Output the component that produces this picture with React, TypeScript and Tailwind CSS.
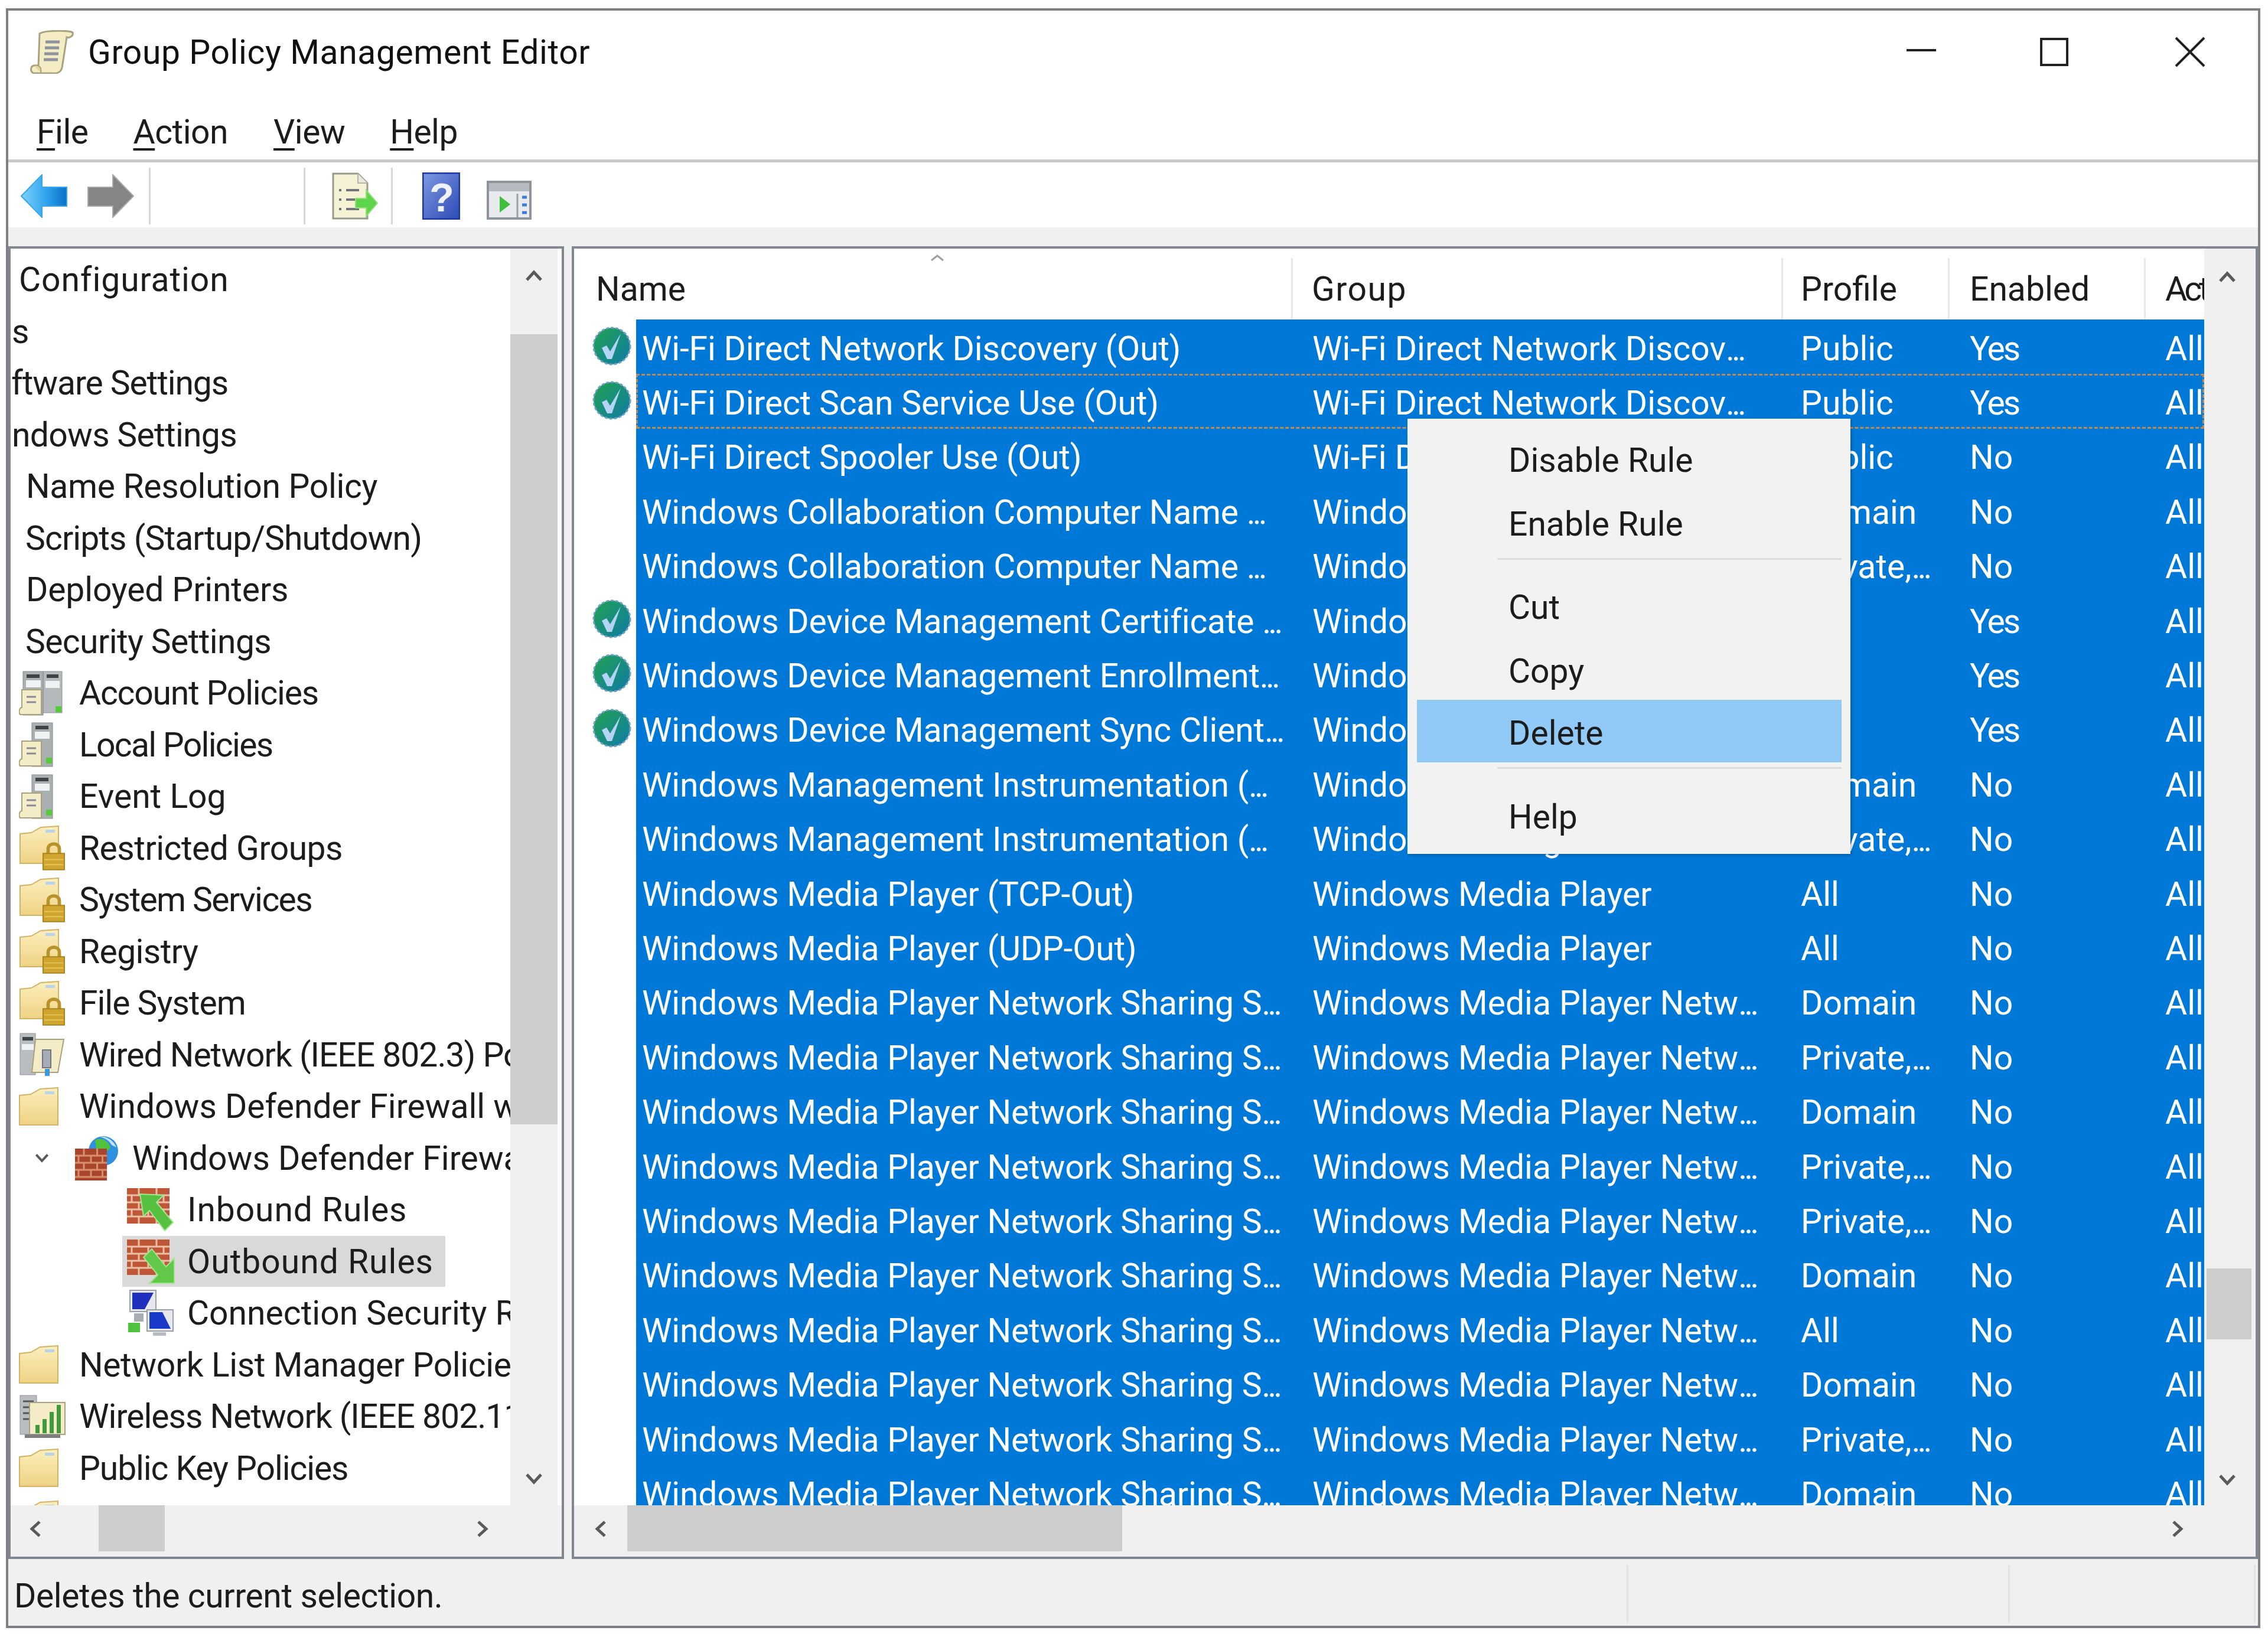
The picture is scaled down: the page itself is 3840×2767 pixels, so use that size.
import React from 'react';

const uiFont = 'font-["Roboto",sans-serif]';

type Rule = { name: string; group: string; profile: string; enabled: string; check?: boolean; focus?: boolean };

const sharing = 'Windows Media Player Network Sharing S...';
const mediaNet = 'Windows Media Player Netw...';

const rules: Rule[] = [
  { name: 'Wi-Fi Direct Network Discovery (Out)', group: 'Wi-Fi Direct Network Discov...', profile: 'Public', enabled: 'Yes', check: true },
  { name: 'Wi-Fi Direct Scan Service Use (Out)', group: 'Wi-Fi Direct Network Discov...', profile: 'Public', enabled: 'Yes', check: true, focus: true },
  { name: 'Wi-Fi Direct Spooler Use (Out)', group: 'Wi-Fi Direct Network Discov...', profile: 'Public', enabled: 'No' },
  { name: 'Windows Collaboration Computer Name ...', group: 'Windows Collaboration Comput...', profile: 'Domain', enabled: 'No' },
  { name: 'Windows Collaboration Computer Name ...', group: 'Windows Collaboration Comput...', profile: 'Private,...', enabled: 'No' },
  { name: 'Windows Device Management Certificate ...', group: 'Windows Device Management', profile: 'All', enabled: 'Yes', check: true },
  { name: 'Windows Device Management Enrollment...', group: 'Windows Device Management', profile: 'All', enabled: 'Yes', check: true },
  { name: 'Windows Device Management Sync Client...', group: 'Windows Device Management', profile: 'All', enabled: 'Yes', check: true },
  { name: 'Windows Management Instrumentation (...', group: 'Windows Management Instrum...', profile: 'Domain', enabled: 'No' },
  { name: 'Windows Management Instrumentation (...', group: 'Windows Management Instrum...', profile: 'Private,...', enabled: 'No' },
  { name: 'Windows Media Player (TCP-Out)', group: 'Windows Media Player', profile: 'All', enabled: 'No' },
  { name: 'Windows Media Player (UDP-Out)', group: 'Windows Media Player', profile: 'All', enabled: 'No' },
  ...['Domain', 'Private,...', 'Domain', 'Private,...', 'Private,...', 'Domain', 'All', 'Domain', 'Private,...', 'Domain'].map((profile) => ({
    name: sharing,
    group: mediaNet,
    profile,
    enabled: 'No',
  })),
];

// Segoe's ellipsis is much tighter than Roboto's
const Clipped = ({ text }: { text: string }) => {
  if (!text.endsWith('...')) return <>{text}</>;
  return (
    <>
      {text.slice(0, -3)}
      <span className="tracking-[-5px]">...</span>
    </>
  );
};

const ScrollIcon = () => (
  <svg viewBox="0 0 74 74" className="w-[74px] h-[74px]">
    <path d="M16 6 C24 0 66 0 72 4 C74 10 66 14 62 12 L54 64 C52 72 44 74 36 73 L6 73 C0 70 0 62 6 60 L14 60 Z" fill="#f4ecc4" stroke="#a9a27c" strokeWidth="3" />
    <path d="M6 60 C14 58 20 62 18 72" fill="#e3d79a" stroke="#a9a27c" strokeWidth="2" />
    <path d="M26 20 H50 M25 30 H49 M24 40 H48 M23 50 H47" stroke="#8f93a0" strokeWidth="5" />
  </svg>
);

const NavArrow = ({ back }: { back?: boolean }) => (
  <svg viewBox="0 0 80 74" className={back ? 'w-[80px] h-[74px]' : 'w-[80px] h-[74px] -scale-x-100'}>
    <defs>
      <linearGradient id="arrowBlue" x1="0" y1="0" x2="1" y2="0">
        <stop offset="0" stopColor="#7fd2fb" />
        <stop offset="0.55" stopColor="#2fa4ee" />
        <stop offset="1" stopColor="#0a6fc4" />
      </linearGradient>
    </defs>
    <path d="M1 37 L36 1 V22 H78 V54 H36 V73 Z" fill={back ? 'url(#arrowBlue)' : '#858585'} stroke={back ? '#3aa6ea' : '#a8a8a8'} strokeWidth="2" />
  </svg>
);

const ExportIcon = () => (
  <svg viewBox="0 0 78 80" className="w-[78px] h-[80px]">
    <path d="M2 2 H44 L60 18 V78 H2 Z" fill="#f6f2d6" stroke="#9a9a8c" strokeWidth="3" />
    <path d="M44 2 V18 H60" fill="#e7e7e0" stroke="#b5b5aa" strokeWidth="2" />
    <path d="M12 30 H16 M24 30 H46 M12 46 H16 M24 46 H46 M12 62 H16 M24 62 H46" stroke="#73737a" strokeWidth="4" />
    <path d="M40 44 H58 V30 L77 52 L58 74 V60 H40 Z" fill="#5ed44a" stroke="#8fe07a" strokeWidth="2" />
  </svg>
);

const HelpIcon = () => (
  <svg viewBox="0 0 64 80" className="w-[64px] h-[80px]">
    <defs>
      <linearGradient id="helpBlue" x1="0" y1="0" x2="1" y2="1">
        <stop offset="0" stopColor="#7e98e2" />
        <stop offset="1" stopColor="#2c4bb6" />
      </linearGradient>
    </defs>
    <rect x="1" y="1" width="62" height="78" fill="url(#helpBlue)" stroke="#1b3b9e" strokeWidth="3" />
    <text x="33" y="66" textAnchor="middle" fontSize="68" fontWeight="700" fontFamily="Liberation Sans, sans-serif" fill="#eef1ff">?</text>
  </svg>
);

const ConsoleIcon = () => (
  <svg viewBox="0 0 76 66" className="w-[76px] h-[66px]">
    <rect x="2" y="2" width="72" height="62" fill="#e8eaed" stroke="#8e949b" strokeWidth="4" />
    <rect x="4" y="4" width="68" height="14" fill="#b6bbc1" />
    <path d="M22 26 L40 40 L22 54 Z" fill="#3fbf3c" />
    <path d="M52 22 V62" stroke="#9aa0a6" strokeWidth="3" />
    <path d="M60 28 H68 M60 41 H68 M60 54 H68" stroke="#3c7fd0" strokeWidth="5" />
  </svg>
);

const Folder = ({ className = 'w-[68px] h-[66px]' }: { className?: string }) => (
  <svg viewBox="0 0 68 66" className={className}>
    <defs>
      <linearGradient id="folderFill" x1="0" y1="0" x2="0" y2="1">
        <stop offset="0" stopColor="#fbefbc" />
        <stop offset="1" stopColor="#efd283" />
      </linearGradient>
    </defs>
    <path d="M1 64 V14 L20 12 L36 3 L66 1 V64 Z" fill="url(#folderFill)" stroke="#d3b366" strokeWidth="2" />
    <path d="M44 7 H60 V12 H44 Z" fill="#b9d3ea" />
  </svg>
);

const LockFolder = () => (
  <div className="relative w-[78px] h-[76px]">
    <Folder className="w-[70px] h-[66px]" />
    <svg viewBox="0 0 40 52" className="absolute right-0 bottom-0 w-[38px] h-[50px]">
      <path d="M10 24 V14 C10 2 30 2 30 14 V24" fill="none" stroke="#b8932a" strokeWidth="6" />
      <rect x="1" y="22" width="38" height="29" fill="#cfa52f" stroke="#a98520" strokeWidth="2" />
      <path d="M3 33 H37 M3 42 H37" stroke="#e6c65a" strokeWidth="2" />
    </svg>
  </div>
);

const ServerIcon = ({ wide }: { wide?: boolean }) => (
  <svg viewBox="0 0 74 76" className="w-[74px] h-[76px]">
    {wide && <rect x="41" y="1" width="32" height="70" fill="#b4babc" stroke="#8e9496" strokeWidth="1" />}
    {wide && <rect x="47" y="6" width="20" height="6" fill="#3d4347" />}
    {wide && <rect x="45" y="17" width="24" height="12" fill="#eef2f2" />}
    <rect x={wide ? 7 : 22} y="1" width={wide ? 34 : 35} height="74" fill="#aab0b2" stroke="#858b8d" strokeWidth="1" />
    <rect x={wide ? 13 : 28} y="6" width="22" height="6" fill="#3d4347" />
    <rect x={wide ? 12 : 27} y="16" width="25" height="12" fill="#eef2f2" />
    <path d="M5 32 H38 V74 H2 C-1 70 1 62 5 62 Z" fill="#f3ecc6" stroke="#a9a27c" strokeWidth="2" />
    <path d="M13 44 H29 M13 53 H29" stroke="#8a8c95" strokeWidth="3" />
    <rect x={wide ? 62 : 46} y="60" width="10" height="10" fill="#58c93a" />
  </svg>
);

const WiredIcon = () => (
  <svg viewBox="0 0 80 76" className="w-[80px] h-[76px]">
    <rect x="2" y="2" width="26" height="70" fill="#b8bec0" stroke="#8e9496" strokeWidth="1" />
    <rect x="6" y="8" width="18" height="6" fill="#3d4347" />
    <rect x="5" y="20" width="20" height="10" fill="#eef2f2" />
    <path d="M28 12 H76 L66 68 H22 Z" fill="#f3ecc6" stroke="#a9a27c" strokeWidth="2" />
    <path d="M40 30 H54 V60 H40 Z" fill="#a7adb8" stroke="#6f7682" strokeWidth="2" />
    <rect x="44" y="62" width="8" height="12" fill="#3b9ad8" />
  </svg>
);

const WirelessIcon = () => (
  <svg viewBox="0 0 80 76" className="w-[80px] h-[76px]">
    <rect x="2" y="2" width="28" height="66" fill="#b8bec0" stroke="#8e9496" strokeWidth="1" />
    <path d="M7 12 H25 M7 22 H25 M7 32 H25 M7 42 H25" stroke="#4d565b" strokeWidth="3" />
    <rect x="18" y="14" width="60" height="54" fill="#f3ecc6" stroke="#a9a27c" strokeWidth="2" />
    <path d="M28 66 V52 H35 V66 Z M40 66 V42 H47 V66 Z M52 66 V30 H59 V66 Z M64 66 V18 H71 V66 Z" fill="#3f9a3b" />
    <rect x="10" y="68" width="60" height="6" fill="#7d7f82" />
  </svg>
);

const Bricks = () => (
  <>
    <rect x="0" y="2" width="72" height="60" fill="#bf5636" />
    <path d="M0 14 H72 M0 26 H72 M0 38 H72 M0 50 H72" stroke="#e9c0a6" strokeWidth="3" />
    <path d="M20 2 V14 M50 2 V14 M8 14 V26 M36 14 V26 M62 14 V26 M20 26 V38 M50 26 V38 M8 38 V50 M36 38 V50 M62 38 V50 M20 50 V62 M50 50 V62" stroke="#e9c0a6" strokeWidth="3" />
  </>
);

const FirewallIcon = () => (
  <svg viewBox="0 0 76 76" className="w-[76px] h-[76px]">
    <circle cx="48" cy="26" r="25" fill="#2f8fe0" />
    <path d="M34 8 C44 2 56 8 60 20 C54 30 42 28 36 22 Z" fill="#4fc23e" />
    <path d="M42 2 C52 0 66 8 70 20 L62 16 C58 8 50 4 42 2 Z" fill="#bfe3fb" />
    <svg x="0" y="22" width="54" height="54" viewBox="0 0 72 72">
      <rect x="0" y="0" width="72" height="72" fill="#a8452c" />
      <path d="M0 16 H72 M0 32 H72 M0 48 H72 M0 64 H72" stroke="#d88f70" strokeWidth="4" />
      <path d="M20 0 V16 M50 0 V16 M8 16 V32 M36 16 V32 M62 16 V32 M20 32 V48 M50 32 V48 M8 48 V64 M36 48 V64 M62 48 V64" stroke="#d88f70" strokeWidth="4" />
    </svg>
  </svg>
);

const RulesIcon = ({ out }: { out?: boolean }) => (
  <svg viewBox="0 0 82 78" className="w-[82px] h-[78px]">
    <Bricks />
    {out ? (
      <path d="M80 76 L38 76 L52 62 L28 32 L42 18 L66 48 L80 34 Z" fill="#62c84a" stroke="#a5e48f" strokeWidth="2" />
    ) : (
      <path d="M22 12 L62 14 L50 26 L78 60 L64 74 L38 40 L28 50 Z" fill="#56c040" stroke="#a5e48f" strokeWidth="2" />
    )}
  </svg>
);

const ConnectionIcon = () => (
  <svg viewBox="0 0 82 80" className="w-[82px] h-[80px]">
    <rect x="5" y="1" width="44" height="36" fill="#e6e8ee" stroke="#9aa0aa" strokeWidth="2" />
    <path d="M9 5 H45 L30 33 H9 Z" fill="#1f2fc0" />
    <rect x="34" y="34" width="44" height="36" fill="#e6e8ee" stroke="#9aa0aa" strokeWidth="2" />
    <path d="M38 38 H60 L74 66 H38 Z" fill="#1b39c8" />
    <rect x="12" y="40" width="16" height="14" fill="#a9adb3" />
    <rect x="2" y="56" width="20" height="16" fill="#4fc23e" />
    <rect x="44" y="72" width="22" height="6" fill="#b8bcc2" />
  </svg>
);

const CheckBadge = () => (
  <svg viewBox="0 0 68 68" className="w-[68px] h-[68px]">
    <defs>
      <linearGradient id="checkGreen" x1="0" y1="0" x2="1" y2="1">
        <stop offset="0" stopColor="#22a34f" />
        <stop offset="1" stopColor="#0f7aa8" />
      </linearGradient>
    </defs>
    <circle cx="34" cy="34" r="31" fill="url(#checkGreen)" stroke="#6f9fc4" strokeWidth="3" strokeDasharray="5 3" />
    <path d="M17 37 L25 33 L31 43 L49 13 L34 56 L26 56 Z" fill="#b4d4f5" />
  </svg>
);

const Chevron = ({ dir, size = 'w-[30px] h-[20px]' }: { dir: 'up' | 'down' | 'left' | 'right'; size?: string }) => {
  const points = { up: '3,17 15,4 27,17', down: '3,3 15,16 27,3', left: '17,3 4,15 17,27', right: '3,3 16,15 3,27' }[dir];
  const box = dir === 'up' || dir === 'down' ? '0 0 30 20' : '0 0 20 30';
  return (
    <svg viewBox={box} className={size}>
      <polyline points={points} fill="none" stroke="#5a5a5a" strokeWidth="5" />
    </svg>
  );
};

type TreeRow = { text: string; pad: string; icon?: React.ReactNode };

const treeRows: TreeRow[] = [
  { text: 'Configuration', pad: 'pl-[14px] tracking-[0.9px]' },
  { text: 's', pad: 'pl-[2px]' },
  { text: 'ftware Settings', pad: 'pl-[1px] tracking-[-1.1px]' },
  { text: 'ndows Settings', pad: 'pl-[2px] tracking-[-0.7px]' },
  { text: 'Name Resolution Policy', pad: 'pl-[26px] tracking-[-0.3px]' },
  { text: 'Scripts (Startup/Shutdown)', pad: 'pl-[25px] tracking-[-0.9px]' },
  { text: 'Deployed Printers', pad: 'pl-[26px] tracking-[-0.15px]' },
  { text: 'Security Settings', pad: 'pl-[25px] tracking-[-0.6px]' },
  { text: 'Account Policies', pad: 'pl-[14px] tracking-[-1.2px]', icon: <ServerIcon wide /> },
  { text: 'Local Policies', pad: 'pl-[14px] tracking-[-1.7px]', icon: <ServerIcon /> },
  { text: 'Event Log', pad: 'pl-[14px]', icon: <ServerIcon /> },
  { text: 'Restricted Groups', pad: 'pl-[14px] tracking-[-0.5px]', icon: <LockFolder /> },
  { text: 'System Services', pad: 'pl-[14px] tracking-[-1.6px]', icon: <LockFolder /> },
  { text: 'Registry', pad: 'pl-[14px] tracking-[-0.6px]', icon: <LockFolder /> },
  { text: 'File System', pad: 'pl-[14px] tracking-[-1px]', icon: <LockFolder /> },
  { text: 'Wired Network (IEEE 802.3) Policies', pad: 'pl-[14px] tracking-[-1px]', icon: <WiredIcon /> },
  { text: 'Windows Defender Firewall with Advanced Security', pad: 'pl-[14px]', icon: <Folder /> },
];

const treeRowsAfter: TreeRow[] = [
  { text: 'Network List Manager Policies', pad: 'pl-[14px] tracking-[-0.4px]', icon: <Folder /> },
  { text: 'Wireless Network (IEEE 802.11) Policies', pad: 'pl-[14px] tracking-[-1px]', icon: <WirelessIcon /> },
  { text: 'Public Key Policies', pad: 'pl-[14px] tracking-[-1.1px]', icon: <Folder /> },
  { text: '', pad: 'pl-[14px]', icon: <Folder /> },
];

const Row = ({ row }: { row: TreeRow }) => (
  <div className={`h-[87.5px] flex items-center whitespace-nowrap ${row.pad}`}>
    {row.icon && <div className="w-[102px] flex items-center shrink-0">{row.icon}</div>}
    <span>{row.text}</span>
  </div>
);

const SubRow = ({ icon, text, selected, track }: { icon: React.ReactNode; text: string; selected?: boolean; track?: string }) => (
  <div className={`h-[87.5px] pl-[189px] flex items-center whitespace-nowrap ${track ?? ''}`}>
    <div className={`h-[86px] flex items-center pl-[8px] ${selected ? 'w-[547px] bg-[#d9d9d9]' : ''}`}>
      <div className="w-[102px] shrink-0 flex items-center">{icon}</div>
      <span>{text}</span>
    </div>
  </div>
);

const MenuItem = ({ label, hot, h, pad = '' }: { label: string; hot?: boolean; h: string; pad?: string }) => (
  <div className={`${h} ${pad} ml-[16px] mr-[15px] pl-[155px] flex items-center ${hot ? 'bg-[#91c9f7]' : ''}`}>
    <span>{label}</span>
  </div>
);

const MenuKey = ({ letter, rest, left }: { letter: string; rest: string; left: string }) => (
  <span className={`${left} tracking-[-0.5px]`}>
    <span className="underline underline-offset-[8px] decoration-[4px]">{letter}</span>
    {rest}
  </span>
);

export default function App() {
  return (
    <div className={`relative w-[3840px] h-[2767px] bg-white pt-[14px] pl-[10px] pr-[13px] pb-[10px] overflow-hidden text-[57px] leading-none text-[#1c1c1c] ${uiFont}`}>
      <div className="h-full border-4 border-[#7d8084] flex flex-col">
        {/* title bar */}
        <div className="h-[140px] flex items-center pl-[37px] pr-[89px] bg-white">
          <ScrollIcon />
          <span className="ml-[24px] flex-1 text-[#111] tracking-[0.6px]">Group Policy Management Editor</span>
          <svg viewBox="0 0 50 50" className="w-[50px] h-[50px]">
            <path d="M0 22 H50" stroke="#222" strokeWidth="4" />
          </svg>
          <svg viewBox="0 0 48 48" className="ml-[176px] w-[48px] h-[48px]">
            <rect x="2" y="2" width="44" height="44" fill="none" stroke="#222" strokeWidth="4" />
          </svg>
          <svg viewBox="0 0 52 52" className="ml-[180px] w-[52px] h-[52px]">
            <path d="M2 2 L50 50 M50 2 L2 50" stroke="#222" strokeWidth="4" />
          </svg>
        </div>

        {/* menu bar */}
        <div className="h-[117px] pt-[18px] flex items-center bg-white border-b-[5px] border-[#c8c8c8]">
          <MenuKey letter="F" rest="ile" left="ml-[48px]" />
          <MenuKey letter="A" rest="ction" left="ml-[76px]" />
          <MenuKey letter="V" rest="iew" left="ml-[77px]" />
          <MenuKey letter="H" rest="elp" left="ml-[76px]" />
        </div>

        {/* toolbar */}
        <div className="h-[110px] bg-white flex items-center pl-[21px] pt-[4px]">
          <NavArrow back />
          <div className="ml-[32px]"><NavArrow /></div>
          <div className="ml-[25px] w-[3px] h-[96px] bg-[#d6d6d6]" />
          <div className="ml-[259px] w-[3px] h-[96px] bg-[#d6d6d6]" />
          <div className="ml-[45px]"><ExportIcon /></div>
          <div className="ml-[22px] w-[3px] h-[96px] bg-[#d6d6d6]" />
          <div className="ml-[50px]"><HelpIcon /></div>
          <div className="ml-[45px] mt-[14px]"><ConsoleIcon /></div>
        </div>

        {/* panes */}
        <div className="flex-1 min-h-0 bg-[#f0f0f0] pt-[32px] flex gap-[13px]">
          <div className="w-[941px] border-4 border-[#7f8790] bg-white flex flex-col">
            <div className="flex-1 min-h-0 flex">
              <div className="w-[846px] overflow-hidden pt-[9px]">
                {treeRows.map((row) => <Row key={row.text} row={row} />)}
                <div className="h-[87.5px] flex items-center whitespace-nowrap pl-[41px]">
                  <div className="w-[20px] mr-[48px]"><Chevron dir="down" size="w-[24px] h-[16px]" /></div>
                  <div className="w-[97px] shrink-0"><FirewallIcon /></div>
                  <span>Windows Defender Firewall with Advanced Security</span>
                </div>
                <SubRow icon={<RulesIcon />} text="Inbound Rules" track="tracking-[0.9px]" />
                <SubRow icon={<RulesIcon out />} text="Outbound Rules" selected track="tracking-[1px]" />
                <SubRow icon={<ConnectionIcon />} text="Connection Security Rules" />
                {treeRowsAfter.map((row) => <Row key={row.text || 'partial'} row={row} />)}
              </div>
              <div className="w-[80px] bg-[#f0f0f0] flex flex-col">
                <div className="h-[145px] flex justify-center pt-[36px]"><Chevron dir="up" /></div>
                <div className="h-[1338px] bg-[#cdcdcd]" />
                <div className="flex-1 flex justify-center items-end pb-[35px]"><Chevron dir="down" /></div>
              </div>
            </div>
            <div className="h-[87px] bg-[#f0f0f0] flex items-start">
              <div className="w-[149px] h-[80px] flex items-center pl-[32px]"><Chevron dir="left" size="w-[20px] h-[30px]" /></div>
              <div className="w-[112px] h-[78px] bg-[#cdcdcd]" />
              <div className="flex-1 h-[80px] flex items-center pl-[528px]"><Chevron dir="right" size="w-[20px] h-[30px]" /></div>
            </div>
          </div>

          <div className="flex-1 min-w-0 border-4 border-[#7f8790] bg-white flex flex-col">
            <div className="flex-1 min-h-0 flex">
              <div className="w-[2760px] overflow-hidden">
                <div className="h-[120px] flex pt-[16px] items-center text-[#1c1c1c]">
                  <div className="relative w-[1217px] h-full pl-[37px] flex items-center border-r-[3px] border-[#e8e8e8]">
                    Name
                    <svg viewBox="0 0 24 12" className="absolute left-[603px] top-[-6px] w-[24px] h-[12px]">
                      <polyline points="2,10 12,2 22,10" fill="none" stroke="#a0a0a0" strokeWidth="3" />
                    </svg>
                  </div>
                  <div className="w-[830px] h-full pl-[32px] flex items-center border-r-[3px] border-[#e8e8e8] tracking-[1.5px]">Group</div>
                  <div className="w-[282px] h-full pl-[30px] flex items-center border-r-[3px] border-[#e8e8e8]">Profile</div>
                  <div className="w-[332px] h-full pl-[34px] flex items-center border-r-[3px] border-[#e8e8e8]">Enabled</div>
                  <div className="flex-1 h-full pl-[33px] flex items-center overflow-hidden tracking-[-5px]">Action</div>
                </div>
                {rules.map((rule, i) => (
                  <div key={i} className="h-[92.4px] flex">
                    <div className="w-[105px] shrink-0 pl-[30px] pt-[11px]">{rule.check && <CheckBadge />}</div>
                    <div className="relative flex-1 min-w-0 flex items-center bg-[#0078d7] text-white whitespace-nowrap pt-[6px]">
                      <div className="w-[1145px] pl-[10px] tracking-[-0.2px]"><Clipped text={rule.name} /></div>
                      <div className="w-[827px]"><Clipped text={rule.group} /></div>
                      <div className="w-[286px]"><Clipped text={rule.profile} /></div>
                      <div className={rule.enabled === 'Yes' ? 'w-[331px] tracking-[-3px]' : 'w-[331px]'}>{rule.enabled}</div>
                      <div className="flex-1 overflow-hidden">Allow</div>
                      {rule.focus && <div className="absolute inset-0 border-[3px] border-dashed border-[#b98a55]" />}
                    </div>
                  </div>
                ))}
              </div>
              <div className="flex-1 bg-[#f0f0f0] flex flex-col items-start">
                <div className="h-[1727px] w-[78px] flex justify-center pt-[38px]"><Chevron dir="up" /></div>
                <div className="w-[76px] h-[120px] bg-[#cdcdcd] ml-[4px]" />
                <div className="flex-1 w-[78px] flex justify-center items-end pb-[33px]"><Chevron dir="down" /></div>
              </div>
            </div>
            <div className="h-[87px] bg-[#f0f0f0] flex items-start">
              <div className="w-[90px] h-[80px] flex items-center pl-[35px]"><Chevron dir="left" size="w-[20px] h-[30px]" /></div>
              <div className="w-[838px] h-[78px] bg-[#cdcdcd]" />
              <div className="flex-1 h-[80px] flex items-center pl-[1777px]"><Chevron dir="right" size="w-[20px] h-[30px]" /></div>
            </div>
          </div>
        </div>

        {/* status bar */}
        <div className="h-[113px] bg-[#f0f0f0] flex items-center pl-[10px] pt-[10px] pb-[4px]">
          <span className="w-[2730px] tracking-[-0.4px] mt-[6px]">Deletes the current selection.</span>
          <div className="w-[3px] self-stretch bg-[#e3e3e3]" />
          <div className="w-[643px]" />
          <div className="w-[3px] self-stretch bg-[#e3e3e3]" />
          <div className="w-[413px]" />
          <div className="w-[3px] self-stretch bg-[#e3e3e3]" />
        </div>
      </div>

      {/* context menu */}
      <div className="absolute left-[2383px] top-[709px] w-[750px] h-[737px] bg-[#f2f2f2] pt-[16px] shadow-[2px_2px_4px_rgba(0,0,0,0.25)]">
        <MenuItem label="Disable Rule" h="h-[108px]" />
        <MenuItem label="Enable Rule" h="h-[108px]" />
        <div className="ml-[152px] mr-[15px] mt-[4px] mb-[26px] h-[3px] bg-[#dcdcdc]" />
        <MenuItem label="Cut" h="h-[108px]" />
        <MenuItem label="Copy" h="h-[103px]" pad="pt-[6px]" />
        <MenuItem label="Delete" h="h-[106px]" hot pad="pt-[6px]" />
        <div className="ml-[152px] mr-[15px] mt-[8px] mb-[28px] h-[3px] bg-[#dcdcdc]" />
        <MenuItem label="Help" h="h-[106px]" />
      </div>
    </div>
  );
}
